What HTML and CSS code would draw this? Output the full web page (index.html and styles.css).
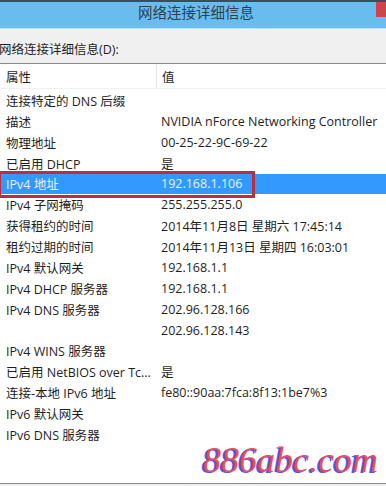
FILE: index.html
```html
<!DOCTYPE html>
<html lang="zh-CN">
<head>
    <meta charset="UTF-8">
    <title>网络连接详细信息</title>
    <link rel="stylesheet" href="styles.css">
</head>
<body>
    <div class="window">
        <div class="titlebar">
            <span class="title">网络连接详细信息</span>
            <span class="close"></span>
        </div>
        <div class="panel">
            <div class="label">网络连接详细信息(D):</div>
        </div>
        <div class="list">
            <div class="row head">
                <div class="cell">属性</div>
                <div class="cell val">值</div>
            </div>
            <div class="row"><div class="cell">连接特定的 DNS 后缀</div><div class="cell val"></div></div>
            <div class="row"><div class="cell">描述</div><div class="cell val">NVIDIA nForce Networking Controller</div></div>
            <div class="row"><div class="cell">物理地址</div><div class="cell val">00-25-22-9C-69-22</div></div>
            <div class="row"><div class="cell">已启用 DHCP</div><div class="cell val">是</div></div>
            <div class="row selected">
                <div class="cell">IPv4 地址</div><div class="cell val">192.168.1.106</div>
                <span class="mark"></span>
            </div>
            <div class="row"><div class="cell">IPv4 子网掩码</div><div class="cell val">255.255.255.0</div></div>
            <div class="row"><div class="cell">获得租约的时间</div><div class="cell val">2014年11月8日 星期六 17:45:14</div></div>
            <div class="row"><div class="cell">租约过期的时间</div><div class="cell val">2014年11月13日 星期四 16:03:01</div></div>
            <div class="row"><div class="cell">IPv4 默认网关</div><div class="cell val">192.168.1.1</div></div>
            <div class="row"><div class="cell">IPv4 DHCP 服务器</div><div class="cell val">192.168.1.1</div></div>
            <div class="row"><div class="cell">IPv4 DNS 服务器</div><div class="cell val">202.96.128.166</div></div>
            <div class="row"><div class="cell"></div><div class="cell val">202.96.128.143</div></div>
            <div class="row"><div class="cell">IPv4 WINS 服务器</div><div class="cell val"></div></div>
            <div class="row"><div class="cell">已启用 NetBIOS over Tc...</div><div class="cell val">是</div></div>
            <div class="row"><div class="cell">连接-本地 IPv6 地址</div><div class="cell val">fe80::90aa:7fca:8f13:1be7%3</div></div>
            <div class="row"><div class="cell">IPv6 默认网关</div><div class="cell val"></div></div>
            <div class="row"><div class="cell">IPv6 DNS 服务器</div><div class="cell val"></div></div>
            <div class="watermark">886abc.com</div>
        </div>
        <div class="bottom"></div>
    </div>
</body>
</html>
```

FILE: styles.css
```css
body {
    margin: 0;
    padding: 0;
    font-family: "Open Sans", "Noto Sans CJK SC", sans-serif;
    font-size: 12.5px;
    color: #1e1e1e;
    background: #f0f0f0;
    overflow: hidden;
}
.window {
    width: 386px;
    height: 486px;
    display: flex;
    flex-direction: column;
}
.titlebar {
    position: relative;
    height: 26px;
    background: #69bdee;
    border-top: 2px solid #3c4c5c;
    border-bottom: 1px solid #b8e2f8;
    display: flex;
    justify-content: center;
    align-items: flex-start;
}
.title {
    font-family: "Noto Sans CJK SC", sans-serif;
    font-size: 14.5px;
    line-height: 20px;
    color: #2e4050;
    margin-left: 6px;
}
.close {
    position: absolute;
    right: 0;
    top: 0;
    width: 10px;
    height: 15px;
    background: #c9464a;
}
.panel {
    height: 34px;
    background: #f0f0f0;
    display: flex;
    align-items: center;
}
.label {
    margin-left: -1px;
    margin-top: 4px;
}
.list {
    position: relative;
    flex: 1;
    background: #fff;
    border-top: 1px solid #8a8a8a;
    border-bottom: 1px solid #8a8a8a;
}
.row {
    position: relative;
    display: grid;
    grid-template-columns: 156px 1fr;
    height: 20.875px;
    align-items: center;
    white-space: nowrap;
}
.row.head {
    height: 24px;
    margin-bottom: 1px;
    border-bottom: 1px solid #f0f0f0;
}
.row.head .val {
    border-left: 1px solid #e6e6e6;
    align-self: stretch;
    display: flex;
    align-items: center;
}
.cell {
    padding-left: 6px;
    overflow: hidden;
}
.val {
    padding-left: 5px;
}
.row.selected {
    background: #3399ff;
    color: #e8f4ff;
}
.mark {
    position: absolute;
    left: -2px;
    top: -3px;
    width: 251px;
    height: 21px;
    border: 3px solid #b8303e;
}
.watermark {
    position: absolute;
    right: 8px;
    bottom: 2px;
    font-family: "Liberation Serif", serif;
    font-style: italic;
    font-size: 36px;
    color: #f04a5a;
    text-shadow: -2px 1px 0 #4a5cf0;
}
.bottom {
    height: 2px;
    background: #f0f0f0;
}
```
